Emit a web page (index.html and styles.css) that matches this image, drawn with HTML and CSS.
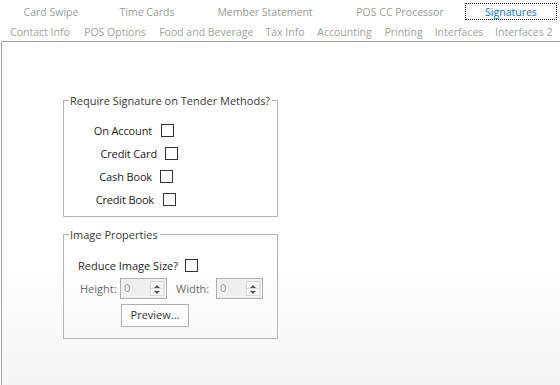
FILE: index.html
```html
<!DOCTYPE html>
<html>
<head>
<meta charset="utf-8">
<link rel="stylesheet" href="styles.css">
</head>
<body>
<div class="tabs">
  <div class="row row1">
    <span class="tab t1">Card Swipe</span>
    <span class="tab t2">Time Cards</span>
    <span class="tab t3">Member Statement</span>
    <span class="tab t4">POS CC Processor</span>
    <span class="tab t5 active">Signatures</span>
  </div>
  <div class="row row2">
    <span class="tab s1">Contact Info</span>
    <span class="tab s2">POS Options</span>
    <span class="tab s3">Food and Beverage</span>
    <span class="tab s4">Tax Info</span>
    <span class="tab s5">Accounting</span>
    <span class="tab s6">Printing</span>
    <span class="tab s7">Interfaces</span>
    <span class="tab s8">Interfaces 2</span>
  </div>
</div>
<div class="panel">
  <fieldset class="group g1">
    <legend>Require Signature on Tender Methods?</legend>
    <div class="checks">
      <div class="chk c1"><span class="ctext">On Account</span><i class="box"></i></div>
      <div class="chk c2"><span class="ctext">Credit Card</span><i class="box"></i></div>
      <div class="chk c3"><span class="ctext">Cash Book</span><i class="box"></i></div>
      <div class="chk c4"><span class="ctext">Credit Book</span><i class="box"></i></div>
    </div>
  </fieldset>
  <fieldset class="group g2">
    <legend>Image Properties</legend>
    <div class="reduce"><span class="rtext">Reduce Image Size?</span><i class="box"></i></div>
    <div class="dims">
      <span class="lbl">Height:</span>
      <div class="spin"><span class="val">0</span><div class="arrows"><b class="up"></b><b class="dn"></b></div></div>
      <span class="lbl wl">Width:</span>
      <div class="spin"><span class="val">0</span><div class="arrows"><b class="up"></b><b class="dn"></b></div></div>
    </div>
    <div class="btnrow"><div class="btn">Preview...</div></div>
  </fieldset>
</div>
</body>
</html>
```
FILE: styles.css
```css
* { box-sizing: border-box; }
html, body { margin: 0; padding: 0; }
body {
  width: 560px; height: 385px; overflow: hidden;
  font-family: "Open Sans", "Noto Sans", sans-serif;
  font-size: 10.5px;
  color: #333;
  background: #fff;
}
.tabs { height: 41px; }
.row { display: flex; white-space: nowrap; color: #9a9a9a; padding-left: 3px; }
.tab { text-align: center; }
.row1 { height: 21px; padding-top: 3px; }
.row1 .tab { height: 17px; line-height: 18px; }
.t1 { width: 96px; } .t2 { width: 96px; } .t3 { width: 140px; }
.t4 { width: 130px; } .t5 { width: 92px; }
.row2 { height: 20px; padding-top: 3px; }
.row2 .tab { line-height: 17px; color: #a0a0a0; }
.s1 { width: 74px; } .s2 { width: 76px; } .s3 { width: 106.5px; } .s4 { width: 51px; }
.s5 { width: 68px; } .s6 { width: 50px; } .s7 { width: 61px; } .s8 { width: 68.5px; }
.tab.active {
  color: #0a6fd8;
  outline: 1px dotted #111;
  outline-offset: -1px;
  background: #fff;
}
.panel {
  height: 344px;
  margin-left: 1px;
  border-left: 1px solid #a0a0a0;
  border-top: 1px solid #a0a0a0;
  background: linear-gradient(#fff 0%, #fff 62%, #f5f5f5 100%);
  padding: 52px 0 0 61px;
}
.group {
  width: 215px;
  margin: 0;
  border: 1px solid #b5b5b5;
  padding: 0;
  color: #262626;
  min-width: 0;
}
.group legend {
  padding: 0 2px 0 1px;
  margin-left: 5px;
  color: #3a3a3a;
  font-size: 11px;
  line-height: 13px;
  white-space: nowrap;
}
.g1 { height: 123px; }
.checks { padding-top: 12px; }
.chk { display: flex; align-items: center; height: 23px; }
.ctext { font-size: 11px; text-align: right; white-space: nowrap; color: #222; letter-spacing: -0.15px; }
.box {
  display: inline-block; width: 13px; height: 13px;
  border: 1px solid #333; background: #fff; flex: none;
}
.c1 .ctext { width: 88px; } .c1 .box { margin-left: 9px; }
.c2 .ctext { width: 93px; } .c2 .box { margin-left: 8px; }
.c3 .ctext { width: 88px; } .c3 .box { margin-left: 8px; }
.c4 .ctext { width: 90px; } .c4 .box { margin-left: 9px; }
.g2 { height: 111px; margin-top: 11px; }
.reduce { display: flex; align-items: center; margin: 14px 0 0 14px; height: 20px; }
.rtext { font-size: 11px; color: #1e1e1e; width: 100px; white-space: nowrap; }
.reduce .box { margin-left: 7px; }
.dims { display: flex; align-items: center; margin: 3px 0 0 16px; color: #6b6b6b; }
.lbl { font-size: 11px; width: 40px; white-space: nowrap; }
.spin {
  width: 47px; height: 21px;
  border: 1px solid #adadad; background: #efefef;
  display: flex; justify-content: space-between;
}
.val { color: #a0a0a0; padding-left: 3px; line-height: 17px; font-size: 11px; }
.arrows {
  width: 14px; margin: 2px 2px 2px 0;
  display: flex; flex-direction: column;
  border: 1px solid #dcdcdc; background: #f4f4f4;
}
.arrows b { flex: 1; position: relative; }
.arrows b.up { border-bottom: 1px solid #dcdcdc; }
.arrows b::after {
  content: ""; position: absolute; left: 3px; top: 3px;
  border-left: 3px solid transparent; border-right: 3px solid transparent;
}
.arrows b.up::after { border-bottom: 3px solid #555; }
.arrows b.dn::after { border-top: 3px solid #555; top: 2px; }
.wl { margin-left: 9px; }
.btnrow { margin: 5px 0 0 57px; }
.btn {
  width: 68px; height: 23px; border: 1px solid #adadad; background: #fff;
  text-align: center; line-height: 20px; font-size: 11px; color: #333;
}
```
